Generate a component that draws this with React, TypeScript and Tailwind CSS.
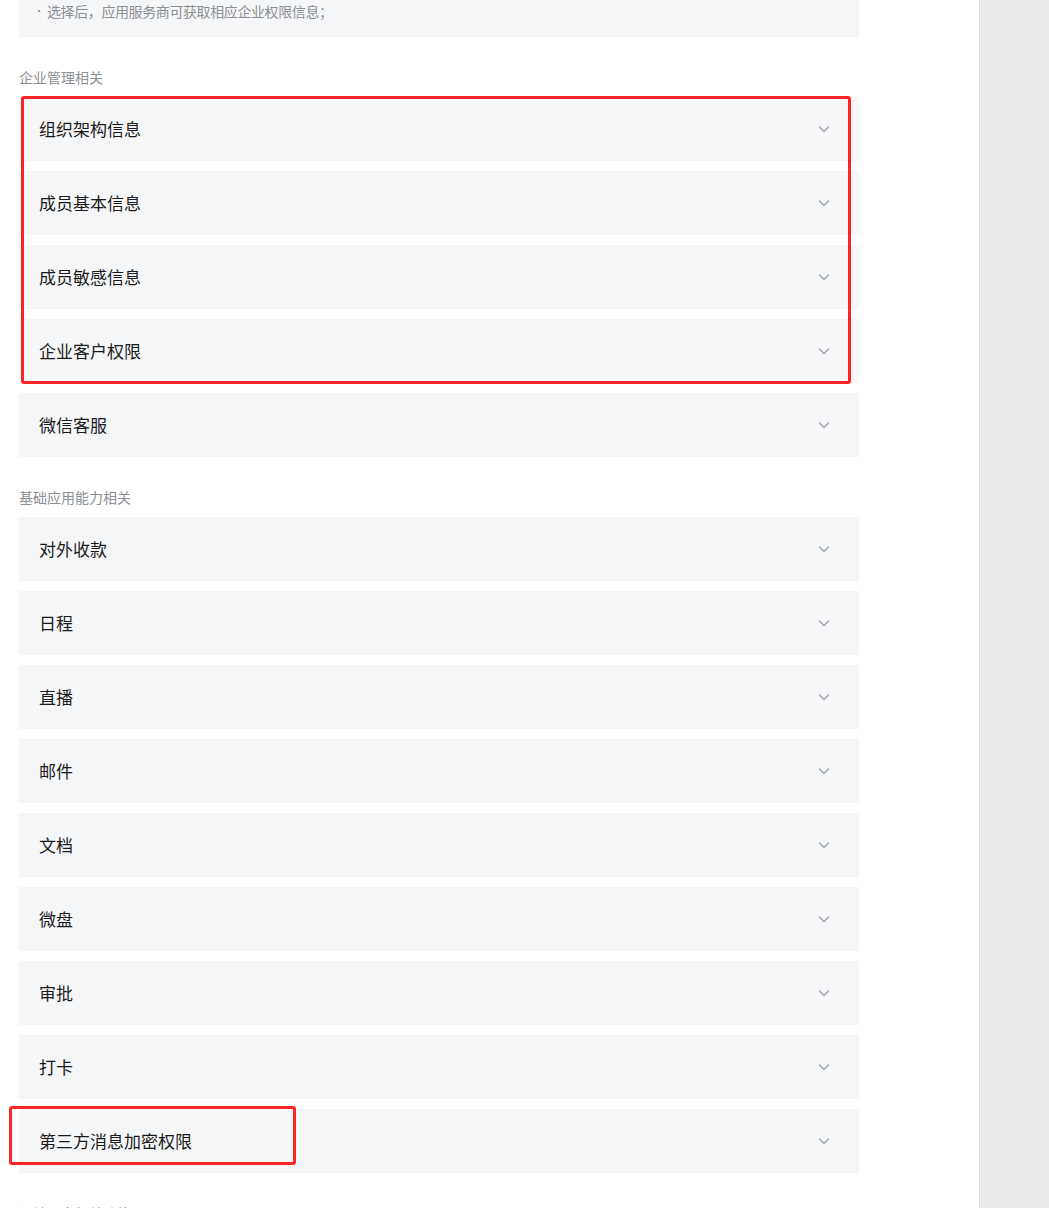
const groups = [
  {
    title: '企业管理相关',
    items: ['组织架构信息', '成员基本信息', '成员敏感信息', '企业客户权限', '微信客服'],
  },
  {
    title: '基础应用能力相关',
    items: ['对外收款', '日程', '直播', '邮件', '文档', '微盘', '审批', '打卡', '第三方消息加密权限'],
  },
  {
    title: '设计更多相关功能',
    items: ['通讯录'],
  },
]

function Chevron() {
  return (
    <svg width="12" height="8" viewBox="0 0 12 8" fill="none" className="shrink-0">
      <path d="M1 1.5L6 6.5L11 1.5" stroke="#a3a6ab" strokeWidth="1.4" />
    </svg>
  )
}

export default function App() {
  return (
    <div
      className="flex h-[1208px] overflow-hidden bg-white"
      style={{ fontFamily: '"Noto Sans CJK SC", "Liberation Sans", sans-serif' }}
    >
      <div className="relative w-[979px] shrink-0 px-[19px]">
        {/* 说明 */}
        <div className="w-[840px] bg-[#f5f6f8] pb-4 pt-px pl-[15px]">
          <div className="flex items-center text-[14px] leading-5 text-[#8c8f94]">
            <span className="mr-[3px] text-[10px]">•</span>
            <span className="tracking-[-0.4px]">选择后，应用服务商可获取相应企业权限信息；</span>
          </div>
        </div>

        {groups.map((g) => (
          <div key={g.title} className="mt-[30px] w-[840px]">
            <div className="mb-[10px] text-[14px] leading-5 text-[#8c8f94]">{g.title}</div>
            <div className="flex flex-col gap-[10px]">
              {g.items.map((it) => (
                <div
                  key={it}
                  className="flex h-16 items-center justify-between bg-[#f5f6f8] pl-5 pr-[29px]"
                >
                  <span className="text-[17px] leading-6 text-[#1a1a1a]">{it}</span>
                  <Chevron />
                </div>
              ))}
            </div>
          </div>
        ))}

        {/* 标注框 */}
        <div className="absolute left-[21px] top-[96px] h-[288px] w-[830px] rounded-[3px] border-[3px] border-[#ff2424]" />
        <div className="absolute left-[9px] top-[1106px] h-[59px] w-[287px] rounded-[3px] border-[3px] border-[#ff2424]" />
      </div>
      <div className="flex-1 border-l border-[#dcdde0] bg-[#e8e9eb]" />
    </div>
  )
}
